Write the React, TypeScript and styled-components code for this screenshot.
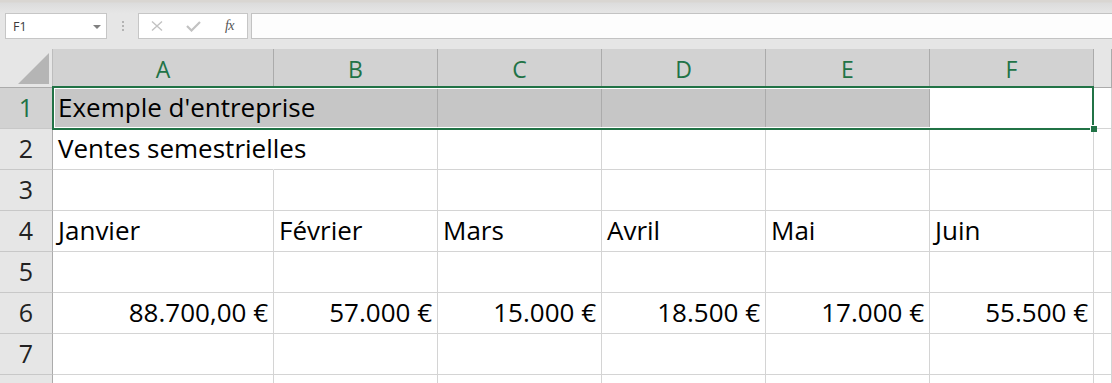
import React from "react";
import styled, { createGlobalStyle } from "styled-components";

const GlobalStyle = createGlobalStyle`
  html, body { margin: 0; padding: 0; background: #ffffff; overflow: hidden; }
  * { box-sizing: border-box; }
`;

const GREEN = "#217346";
const CELL_FONT = `"Open Sans", "Noto Sans", "Liberation Sans", sans-serif`;

const Page = styled.div`
  width: 1112px;
  height: 383px;
  overflow: hidden;
  background: #ffffff;
  display: flex;
  flex-direction: column;
`;

const FormulaBar = styled.div`
  height: 49px;
  flex: none;
  display: flex;
  align-items: flex-start;
  padding: 13px 0 0 5px;
  background: linear-gradient(#d9d6d2 0, #d9d6d2 2px, #dcdcdc 3px, #e4e4e4 11px, #e6e6e6 14px);
`;

const NameBox = styled.div`
  width: 102px;
  height: 26px;
  background: #ffffff;
  border: 1px solid #c6c6c6;
  display: flex;
  align-items: center;
  justify-content: space-between;
  padding: 0 5px 0 7px;
  font-family: "Open Sans", "Liberation Sans", sans-serif;
  font-size: 12.5px;
  color: #3a3a3a;
`;

const DropArrow = styled.span`
  width: 0;
  height: 0;
  border-left: 4px solid transparent;
  border-right: 4px solid transparent;
  border-top: 4px solid #808080;
  margin-top: 1px;
`;

const Grip = styled.div`
  width: 31px;
  height: 26px;
  display: flex;
  flex-direction: column;
  align-items: center;
  justify-content: center;
  gap: 2px;
  padding-left: 1px;
`;

const GripDot = styled.span`
  width: 2px;
  height: 2px;
  background: #b3b3b3;
`;

const ButtonBox = styled.div`
  width: 110px;
  height: 26px;
  background: #ffffff;
  border: 1px solid #c6c6c6;
  display: grid;
  grid-template-columns: repeat(3, 1fr);
  align-items: center;
  justify-items: center;
`;

const FxLabel = styled.span`
  font-family: "Liberation Serif", "DejaVu Serif", serif;
  font-style: italic;
  font-size: 14px;
  color: #555555;
  letter-spacing: -0.5px;
  margin-left: 1px;
  margin-top: -1px;
`;

const FormulaInput = styled.div`
  flex: 1;
  height: 26px;
  margin-left: 3px;
  background: #fdfdfd;
  border: 1px solid #c3c3c3;
  border-right: none;
`;

const SheetWrap = styled.div`
  position: relative;
  flex: none;
`;

const Grid = styled.div`
  display: grid;
  grid-template-columns: 53px 221px repeat(5, 164px) 1fr;
  grid-template-rows: 39px repeat(8, 41px);
  background: #ffffff;
`;

const Corner = styled.div`
  background: #e6e6e6;
  border-right: 1px solid #bdbdbd;
  border-bottom: 1px solid #ababab;
  display: flex;
  align-items: flex-end;
  justify-content: flex-end;
  padding: 0 3px 3px 0;
`;

const CornerTriangle = styled.span`
  width: 0;
  height: 0;
  border-left: 31px solid transparent;
  border-bottom: 31px solid #b5b5b5;
`;

const ColHeader = styled.div<{ $selected?: boolean }>`
  background: ${(p) => (p.$selected ? "#d2d2d2" : "#e6e6e6")};
  border-right: 1px solid #ababab;
  border-bottom: 1px solid #ababab;
  display: flex;
  align-items: flex-end;
  justify-content: center;
  padding-bottom: 6px;
  font-family: ${CELL_FONT};
  font-size: 23px;
  line-height: 23px;
  color: ${(p) => (p.$selected ? GREEN : "#222222")};
`;

const RowHeader = styled.div<{ $selected?: boolean }>`
  background: ${(p) => (p.$selected ? "#d2d2d2" : "#e6e6e6")};
  border-right: 1px solid #ababab;
  border-bottom: 1px solid #c8c8c8;
  display: flex;
  align-items: flex-end;
  justify-content: center;
  padding-bottom: 8px;
  font-family: ${CELL_FONT};
  font-size: 25px;
  line-height: 26px;
  color: ${(p) => (p.$selected ? GREEN : "#222222")};
`;

const Cell = styled.div<{ $align?: "left" | "right"; $shaded?: boolean; $spill?: boolean }>`
  position: relative;
  z-index: ${(p) => (p.$spill ? 1 : 0)};
  background: ${(p) => (p.$shaded ? "#c6c6c6" : "#ffffff")};
  border-right: 1px solid
    ${(p) => (p.$spill ? (p.$shaded ? "#c6c6c6" : "#ffffff") : p.$shaded ? "#ababab" : "#d4d4d4")};
  border-bottom: 1px solid #d4d4d4;
  display: flex;
  align-items: flex-end;
  justify-content: ${(p) => (p.$align === "right" ? "flex-end" : "flex-start")};
  padding: 0 5px 8px 5px;
  font-family: ${CELL_FONT};
  font-size: 26px;
  line-height: 26px;
  color: #000000;
  white-space: nowrap;
  overflow: visible;
`;

const Spill = styled.span`
  white-space: nowrap;
`;

const Selection = styled.div`
  position: absolute;
  left: 52px;
  top: 37px;
  width: 1042px;
  height: 44px;
  border: 2px solid ${GREEN};
  box-shadow: inset 0 0 0 1px #ffffff;
  pointer-events: none;
  z-index: 3;
`;

const FillHandle = styled.div`
  position: absolute;
  right: -5px;
  bottom: -4px;
  width: 7px;
  height: 7px;
  background: ${GREEN};
  border: 1px solid #ffffff;
  border-right: none;
  border-bottom: none;
`;

const COLS = ["A", "B", "C", "D", "E", "F"];

type CellData = { text: string; align?: "left" | "right" };

const empty = (): CellData[] => COLS.map(() => ({ text: "" }));

const ROWS: CellData[][] = [
  [{ text: "Exemple d'entreprise" }, ...empty().slice(1)],
  [{ text: "Ventes semestrielles" }, ...empty().slice(1)],
  empty(),
  [
    { text: "Janvier" },
    { text: "Février" },
    { text: "Mars" },
    { text: "Avril" },
    { text: "Mai" },
    { text: "Juin" },
  ],
  empty(),
  [
    { text: "88.700,00 €", align: "right" },
    { text: "57.000 €", align: "right" },
    { text: "15.000 €", align: "right" },
    { text: "18.500 €", align: "right" },
    { text: "17.000 €", align: "right" },
    { text: "55.500 €", align: "right" },
  ],
  empty(),
  empty(),
];

const CancelIcon = () => (
  <svg width="12" height="12" viewBox="0 0 12 12" aria-hidden>
    <path d="M1 1.5 L11 10.5 M11 1.5 L1 10.5" stroke="#c2c2c2" strokeWidth="1.4" fill="none" />
  </svg>
);

const EnterIcon = () => (
  <svg width="15" height="11" viewBox="0 0 15 11" aria-hidden>
    <path d="M1 5 L5.5 9.5 L14 1" stroke="#c2c2c2" strokeWidth="2.2" fill="none" />
  </svg>
);

export default function App() {
  return (
    <Page>
      <GlobalStyle />
      <FormulaBar>
        <NameBox>
          <span>F1</span>
          <DropArrow />
        </NameBox>
        <Grip>
          <GripDot />
          <GripDot />
          <GripDot />
        </Grip>
        <ButtonBox>
          <CancelIcon />
          <EnterIcon />
          <FxLabel>fx</FxLabel>
        </ButtonBox>
        <FormulaInput />
      </FormulaBar>
      <SheetWrap>
        <Grid>
          <Corner>
            <CornerTriangle />
          </Corner>
          {COLS.map((c) => (
            <ColHeader key={c} $selected>
              {c}
            </ColHeader>
          ))}
          <ColHeader />
          {ROWS.map((row, ri) => (
            <React.Fragment key={ri}>
              <RowHeader $selected={ri === 0}>{ri < 7 ? ri + 1 : ""}</RowHeader>
              {row.map((cell, ci) => {
                const shaded = ri === 0 && ci < 5;
                const spill = ci === 0 && (ri === 0 || ri === 1);
                return (
                  <Cell key={ci} $align={cell.align} $shaded={shaded} $spill={spill}>
                    {spill ? <Spill>{cell.text}</Spill> : cell.text}
                  </Cell>
                );
              })}
              <Cell />
            </React.Fragment>
          ))}
        </Grid>
        <Selection>
          <FillHandle />
        </Selection>
      </SheetWrap>
    </Page>
  );
}
